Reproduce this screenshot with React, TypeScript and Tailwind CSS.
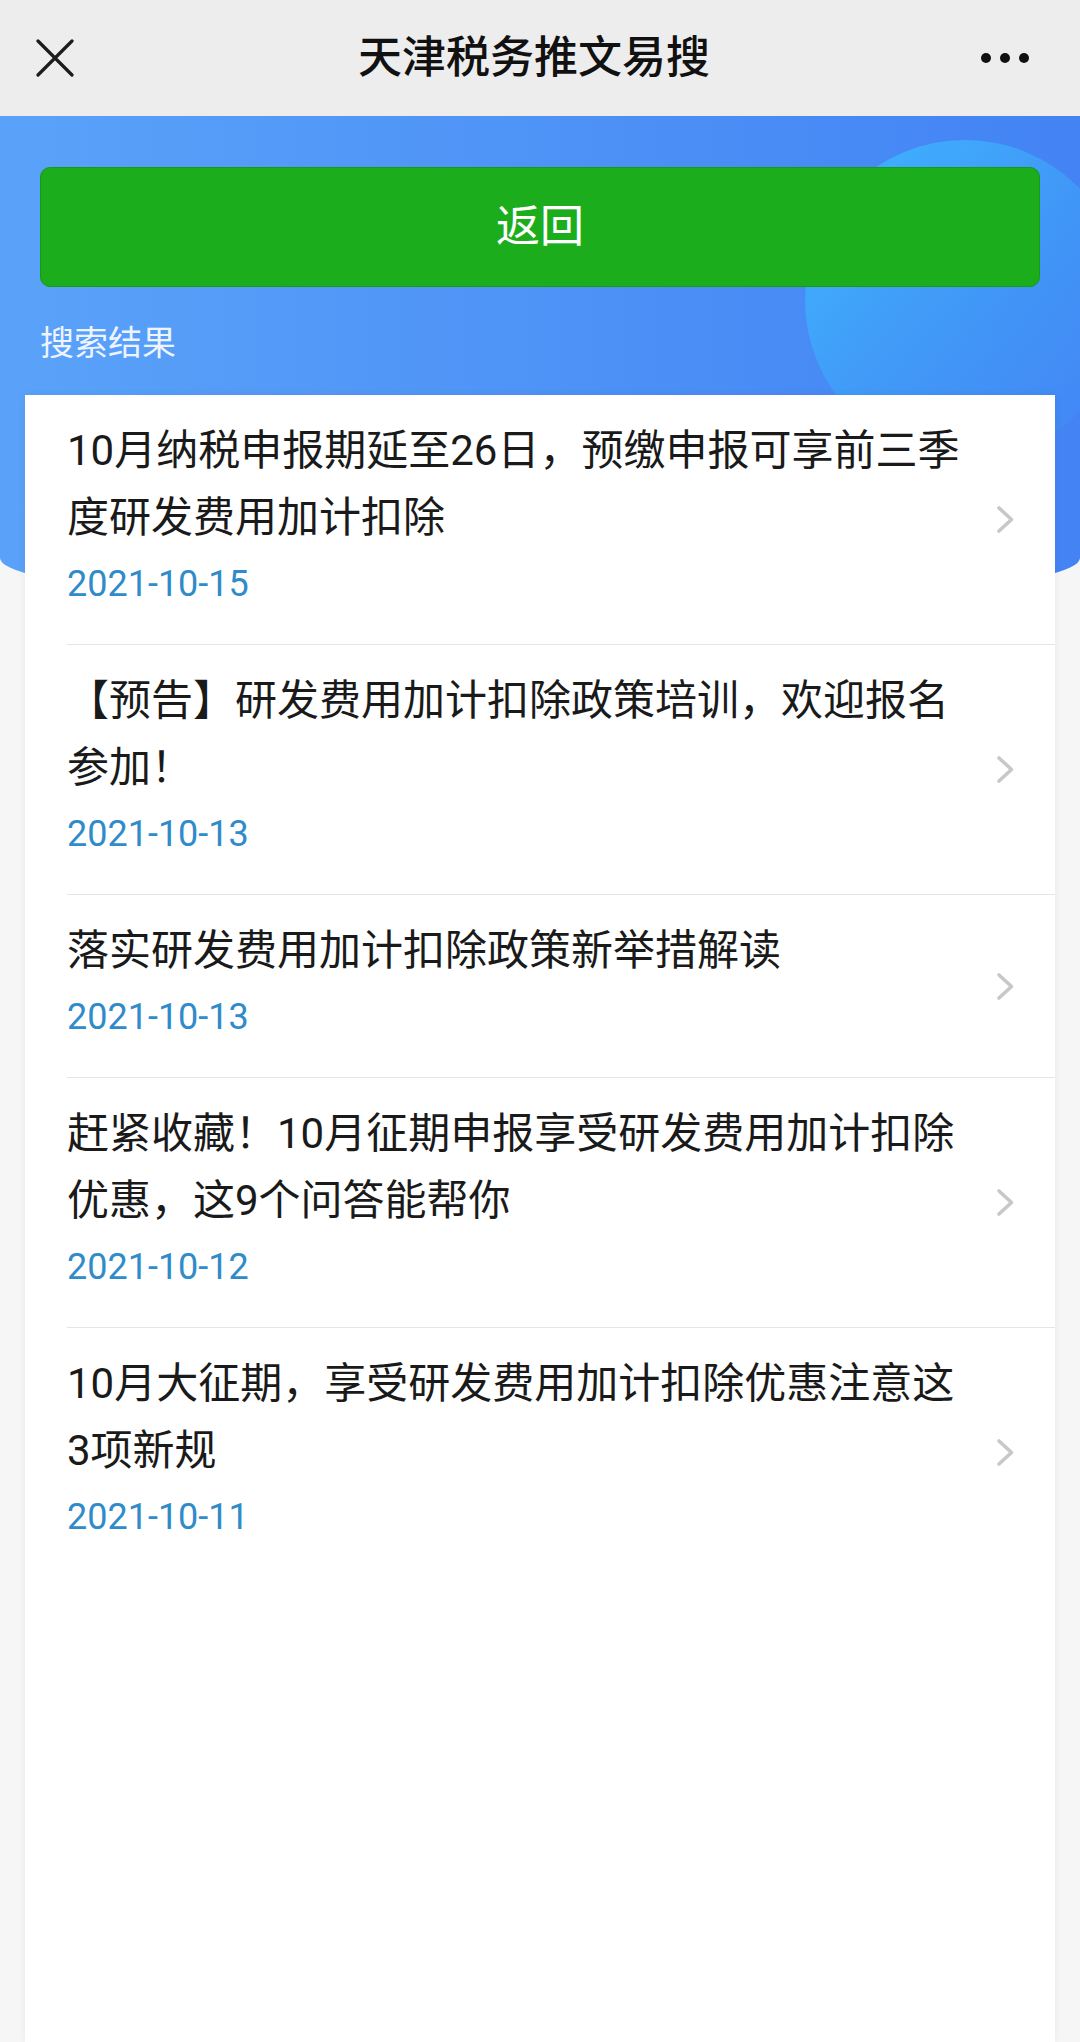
const ARTICLES: { title: string; date: string }[] = [
  { title: "10月纳税申报期延至26日，预缴申报可享前三季度研发费用加计扣除", date: "2021-10-15" },
  { title: "【预告】研发费用加计扣除政策培训，欢迎报名参加！", date: "2021-10-13" },
  { title: "落实研发费用加计扣除政策新举措解读", date: "2021-10-13" },
  { title: "赶紧收藏！10月征期申报享受研发费用加计扣除优惠，这9个问答能帮你", date: "2021-10-12" },
  { title: "10月大征期，享受研发费用加计扣除优惠注意这3项新规", date: "2021-10-11" },
];

function CloseIcon() {
  return (
    <svg width="38" height="38" viewBox="0 0 38 38" fill="none">
      <path d="M2 2L36 36M36 2L2 36" stroke="#1c1c1c" strokeWidth="3.2" strokeLinecap="round" />
    </svg>
  );
}

function MoreIcon() {
  return (
    <svg width="50" height="12" viewBox="0 0 50 12">
      <circle cx="6" cy="6" r="5" fill="#111" />
      <circle cx="25" cy="6" r="5" fill="#111" />
      <circle cx="44" cy="6" r="5" fill="#111" />
    </svg>
  );
}

function Chevron() {
  return (
    <svg width="19" height="29" viewBox="0 0 19 29" fill="none" className="shrink-0">
      <path d="M3 3L15.5 14.5L3 26" stroke="#c8c8c8" strokeWidth="3.6" strokeLinecap="round" strokeLinejoin="round" />
    </svg>
  );
}

export default function App() {
  return (
    <div
      className="flex min-h-[2042px] w-[1080px] flex-col bg-[#f6f6f6]"
      style={{ fontFamily: 'Roboto, "Noto Sans CJK SC", "Noto Sans", sans-serif' }}
    >
      {/* top bar */}
      <header className="grid h-[116px] shrink-0 grid-cols-[1fr_auto_1fr] items-center bg-[#ededed]">
        <div className="pl-[36px]">
          <CloseIcon />
        </div>
        <h1 className="mr-[12px] text-[44px] font-medium leading-none text-[#111]">天津税务推文易搜</h1>
        <div className="flex justify-end pr-[50px]">
          <MoreIcon />
        </div>
      </header>

      {/* blue banner */}
      <section className="relative shrink-0 overflow-hidden rounded-b-[50%_50px] bg-linear-to-r from-[#5aa2f9] to-[#4383f4] px-[40px] pt-[51px] pb-[241px]">
        <div className="absolute left-[805px] top-[24px] h-[320px] w-[320px] rounded-full bg-linear-to-br from-[#3db6ff] via-[#3f9ff8]/70 to-[#4586f4]/0" />
        <button
          type="button"
          className="relative flex h-[120px] w-full items-center justify-center rounded-[10px] border border-[#179a16] bg-[#1cad1c] text-[44px] text-white"
        >
          返回
        </button>
        <p className="relative mt-[32px] text-[34px] leading-[48px] text-[#eef4ff]">搜索结果</p>
      </section>

      {/* results card */}
      <main className="relative mx-[25px] -mt-[213px] flex-1 bg-white shadow-[0_0_8px_rgba(0,0,0,0.06)]">
        {ARTICLES.map((a, i) => (
          <div
            key={i}
            className={
              i < ARTICLES.length - 1
                ? "ml-[42px] flex items-center border-b border-[#e5e5e5] pr-[40px]"
                : "ml-[42px] flex items-center pr-[40px]"
            }
          >
            <div className="flex-1 pt-[22px] pb-[40px]">
              <p className="text-[42px] leading-[67px] text-[#1a1a1a]">{a.title}</p>
              <p className="mt-[13px] text-[36px] leading-[40px] text-[#2f8bc9]">{a.date}</p>
            </div>
            <div className="ml-[29px]">
              <Chevron />
            </div>
          </div>
        ))}
      </main>
    </div>
  );
}
